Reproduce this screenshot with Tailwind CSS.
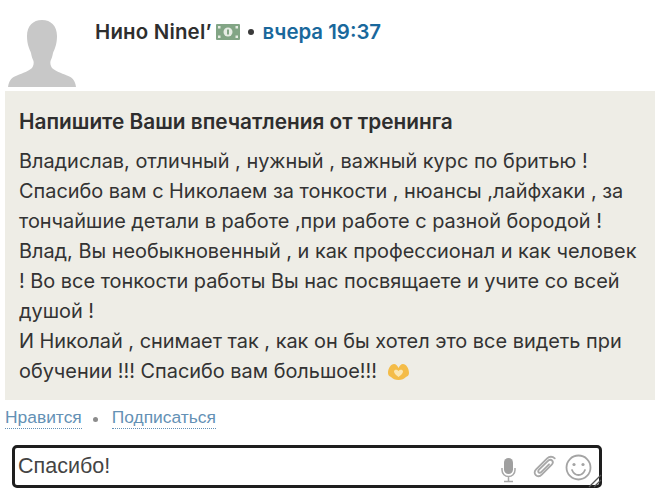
<!DOCTYPE html>
<html><head><meta charset="utf-8"><script src="https://cdn.jsdelivr.net/npm/@tailwindcss/browser@4"></script></head>
<body class="bg-white font-['Inter','Liberation_Sans',sans-serif] overflow-hidden">
<div class="w-[668px] h-[497px] overflow-hidden flex flex-col">
  <div class="flex h-[91px] pl-[8px]">
    <svg class="w-[68px] h-[67px] mt-[20px]" viewBox="0 0 68 67"><path fill="#c8c8c8" d="M34 0c-9 0-15 6-15 16 0 4 .5 8 2 12 .5 2 1.500 3 2 5 .5 3 1.500 6 2.500 8 .5 2 0 5-1.500 7-3 3-9 5-15 7.500C4 57 1 60 0 67h68c-1-7-4-10-9-11.500-6-2.500-12-4.500-15-7.500-1.500-2-2-5-1.500-7 1-2 2-5 2.500-8 .5-2 1.500-3 2-5 1.500-4 2-8 2-12C49 6 43 0 34 0z"/></svg>
    <div class="ml-[19px] mt-[20px] flex items-center h-[24px] text-[20.4px] font-semibold text-[#2e2e2e] leading-none">
      <span class="tracking-[.2px]">Нино Ninel’</span>
      <svg class="w-[24px] h-[16px] ml-[4px]" viewBox="0 0 24 16"><rect width="24" height="16" rx="1" fill="#82a585"/><circle cx="12" cy="8" r="4.500" fill="#e6ece4"/><rect x="11" y="5.500" width="2" height="5" fill="#82a585"/><g fill="#e6ece4"><rect x="2" y="2" width="2.500" height="2.500"/><rect x="19.500" y="2" width="2.500" height="2.500"/><rect x="2" y="11.500" width="2.500" height="2.500"/><rect x="19.500" y="11.500" width="2.500" height="2.500"/></g></svg>
      <span class="w-[6px] h-[6px] rounded-full bg-[#3a3a3a] ml-[8px]"></span>
      <span class="ml-[9px] text-[#19689c]">вчера 19:37</span>
    </div>
  </div>
  <div class="mx-[5px] w-[650px] h-[309px] bg-[#eeede6] pl-[14px] pt-[18px] text-[#2e2e2e]">
    <h2 class="text-[20.8px] font-semibold leading-[26px]">Напишите Ваши впечатления от тренинга</h2>
    <p class="mt-[11px] text-[19.9px] leading-[30px] whitespace-nowrap text-[#333333]">Владислав, отличный , нужный , важный курс по бритью !<br>Спасибо вам с Николаем за тонкости , нюансы ,лайфхаки , за<br>тончайшие детали в работе ,при работе с разной бородой !<br>Влад, Вы необыкновенный , и как профессионал и как человек<br>! Во все тонкости работы Вы нас посвящаете и учите со всей<br>душой !<br>И Николай , снимает так , как он бы хотел это все видеть при<br>обучении !!! Спасибо вам большое!!! <svg class="inline-block w-[23px] h-[17px] align-[-2px] ml-[4px]" viewBox="0 0 23 17"><path fill="#f4bc48" d="M1 10C1 5 4 1 7 1c2 0 3.500 2 4.500 4C12.500 3 14 1 16 1c3 0 6 4 6 9 0 2-1 3-3 4-2 2-4 3-7.500 3S6 16 4 14c-2-1-3-2-3-4z"/><path fill="#fbe7b4" d="M11.500 14c-2-1.500-4.500-3.500-4.500-5.500 0-2 3-2.500 4.500-.5 1.500-2 4.500-1.500 4.500.5s-2.500 4-4.500 5.500z"/></svg></p>
  </div>
  <div class="mt-[9px] pl-[5px] flex items-center h-[20px] text-[17.4px] font-['Liberation_Sans',sans-serif] text-[#6491b5] leading-none">
    <a class="border-b border-dotted border-[#6491b5] pb-[2px]">Нравится</a>
    <span class="w-[5px] h-[5px] rounded-full bg-[#8c8c8c] ml-[11px]"></span>
    <a class="ml-[14px] border-b border-dotted border-[#6491b5] pb-[2px]">Подписаться</a>
  </div>
  <div class="relative mt-[16px] ml-[12px] w-[590px] h-[43px] border-[3px] border-[#1e1e1e] rounded-[5px] flex items-center pl-[3px] text-[21.5px] text-[#444444] font-['Liberation_Sans',sans-serif]">
    <span>Спасибо!</span>
    <svg class="absolute left-[485px] top-[9px] w-[17px] h-[26px]" viewBox="0 0 17 26"><rect x="4" y="1" width="9" height="16" rx="4.500" fill="#a0a0a0"/><path d="M2 11v2c0 4 3 6.500 6.500 6.500S15 17 15 13v-2M8.500 19.500V24M4 24.500h9" fill="none" stroke="#a8a8a8" stroke-width="1.500"/></svg>
    <svg class="absolute left-[517px] top-[6px] w-[26px] h-[26px]" viewBox="0 0 24 24" fill="none" stroke="#a8a8a8" stroke-width="1.700" stroke-linecap="round"><path d="M21 4c-2-2-5-2-7 0L4 14c-2 2-2 4-.5 5.500S7 21 9 19l9-9c1.500-1.500 1.500-3 .5-4s-2.500-1-4 .5l-8 8c-1 1-1 2-.3 2.500s1.500.5 2.500-.5l7-7"/></svg>
    <svg class="absolute left-[550px] top-[6px] w-[27px] h-[27px]" viewBox="0 0 27 27" fill="none" stroke="#a4a4a4" stroke-width="1.800"><circle cx="13.500" cy="13.500" r="12"/><circle cx="9" cy="10.500" r="1.600" fill="#a4a4a4" stroke="none"/><circle cx="18" cy="10.500" r="1.600" fill="#a4a4a4" stroke="none"/><path d="M7 16c1.500 3.500 4 5 6.500 5s5-1.500 6.500-5" stroke-linecap="round"/></svg>
    <svg class="absolute right-[-3px] bottom-[-3px] w-[14px] h-[14px]" viewBox="0 0 14 14" fill="none" stroke="#555" stroke-width="1.300"><path d="M1 13 13 1M6 13l7-7"/></svg>
  </div>
</div>
</body></html>
